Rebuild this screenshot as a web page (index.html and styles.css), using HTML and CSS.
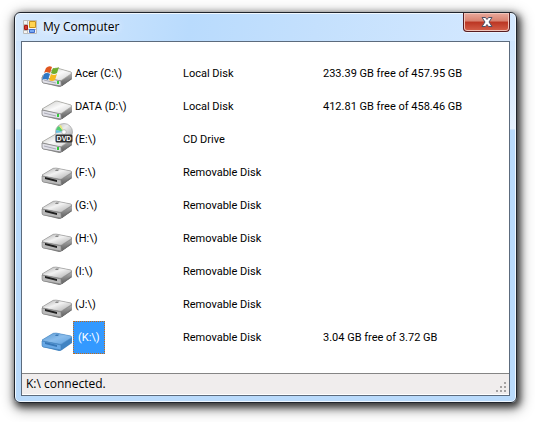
FILE: index.html
```html
<!DOCTYPE html>
<html lang="en">
<head>
<meta charset="utf-8">
<title>My Computer</title>
<link rel="stylesheet" href="styles.css">
</head>
<body>
<svg class="defs" aria-hidden="true">
  <defs>
    <linearGradient id="top" x1="0" y1="0" x2="1" y2="1">
      <stop offset="0" stop-color="#a5a5a5"/><stop offset=".45" stop-color="#f2f2f2"/><stop offset="1" stop-color="#a8a8a8"/>
    </linearGradient>
    <linearGradient id="lit" x1="0" y1="0" x2="1" y2="1">
      <stop offset="0" stop-color="#c4c4c0"/><stop offset=".5" stop-color="#fafafa"/><stop offset="1" stop-color="#cccccc"/>
    </linearGradient>
    <linearGradient id="side" x1="0" y1="0" x2="0" y2="1">
      <stop offset="0" stop-color="#b0b0b0"/><stop offset="1" stop-color="#5c5c5c"/>
    </linearGradient>
    <linearGradient id="disc" x1="0" y1="0" x2="1" y2="1">
      <stop offset="0" stop-color="#b4b8bb"/><stop offset=".4" stop-color="#ececec"/><stop offset="1" stop-color="#9a9ea1"/>
    </linearGradient>
    <linearGradient id="bluetop" x1="0" y1="0" x2="1" y2="1">
      <stop offset="0" stop-color="#5897d0"/><stop offset=".5" stop-color="#8abdec"/><stop offset="1" stop-color="#5b9fe0"/>
    </linearGradient>
    <symbol id="fixed" viewBox="0 0 32 33">
      <path d="M1 19 13 12Q14 11 16 11L30 15Q31 16 31 17V22L21 29Q20 30 18 30L2 26Q1 25 1 24Z" fill="#8a8a8a"/>
      <path d="M20 23 31 16V22L21 29Z" fill="url(#side)"/>
      <path d="M1 19 13 12Q14 11 16 11L30 15Q31 16 30 17L21 23Q20 24 18 24L2 20Z" fill="url(#lit)" stroke="#a3a39e" stroke-width=".7"/>
      <path d="M1 20 20 24V29L2 26Q1 25 1 24Z" fill="#e1e1e8" stroke="#777" stroke-width=".7"/>
      <path d="M3 23 15 26" stroke="#aaaab6"/>
      <path d="M17 24V27" stroke="#35c93b" stroke-width="2"/>
      <path d="M21 28 30 22" stroke="#707070"/>
    </symbol>
    <symbol id="removable" viewBox="0 0 32 33">
      <path d="M1 19 11 13Q12 12 15 12L30 15Q31 16 31 17V22L21 29Q20 30 18 30L2 26Q1 25 1 24Z" fill="#777"/>
      <path d="M21 23 31 17V22L21 29Z" fill="url(#side)"/>
      <path d="M1 19 11 13Q12 12 15 12L30 15Q31 16 30 17L22 22Q20 24 18 23L2 20Z" fill="url(#top)" stroke="#989898" stroke-width=".6"/>
      <path d="M1 20 20 24V29L2 26Q1 25 1 24Z" fill="#b9b9b9" stroke="#818181" stroke-width=".6"/>
      <path d="M4 21 16 24V26L4 23Z" fill="#202020"/>
      <path d="M15 13.500H18L17 15H14Z" fill="#888"/>
      <path d="M21 28 30 22" stroke="#707070"/>
    </symbol>
    <symbol id="selected" viewBox="0 0 32 33">
      <path d="M1 19 11 13Q12 12 15 12L30 15Q31 16 31 17V22L21 29Q20 30 18 30L2 26Q1 25 1 24Z" fill="#4184c3"/>
      <path d="M1 19 11 13Q12 12 15 12L30 15Q31 16 30 17L22 22Q20 24 18 23L2 20Z" fill="url(#bluetop)" stroke="#5590c8" stroke-width=".6"/>
      <path d="M1 20 20 24V29L2 26Q1 25 1 24Z" fill="#69a9e6" stroke="#427fb9" stroke-width=".6"/>
      <path d="M4 21 16 24V26L4 23Z" fill="#3878b8"/>
      <path d="M15 13.500H18L17 15H14Z" fill="#3a78b6"/>
    </symbol>
    <symbol id="flag" viewBox="0 0 32 33">
      <path d="M5 11Q8 8 11 10L9 16Q6 14 3 16Z" fill="#e0561f"/>
      <path d="M12 11Q15 12 18 10L16 16Q13 18 10 16Z" fill="#6fae2e"/>
      <path d="M3 17Q6 15 9 17L7 23Q4 21 1 23Z" fill="#2f78c6"/>
      <path d="M10 17Q13 19 16 17L14 23Q11 25 8 23Z" fill="#f5b91f"/>
    </symbol>
    <symbol id="dvd" viewBox="0 0 32 33">
      <circle cx="23" cy="9" r="8.5" fill="url(#disc)" stroke="#a3a3a3" stroke-width=".7"/>
      <path d="M23 9 15 7Q16 4 18 3Z" fill="#52ce72"/>
      <path d="M23 9 15 7 15 10Z" fill="#65bfe0"/>
      <path d="M23 9 18 3 20 2Z" fill="#e9e779"/>
      <circle cx="23" cy="9" r="2.3" fill="#fff" stroke="#aaa" stroke-width=".7"/>
      <rect x="14.5" y="11.5" width="17" height="8" rx="1.5" fill="#303030"/>
      <text x="23" y="18.3" class="dvd-text">DVD</text>
    </symbol>
  </defs>
</svg>
<main class="window">
  <header class="titlebar">
    <svg class="app-icon" viewBox="0 0 14 14" aria-hidden="true">
      <path d="M.5.5H13.5V13.5H.5Z" fill="#f4f4f4" stroke="#bbb"/>
      <path d="M0 4.5H5M4.5 0V14M4 9.5H14M0 10.5H5" stroke="#bbb"/>
      <path d="M6.500 1.500H12.500V7.500H6.500Z" fill="#ffd452" stroke="#c8921a"/>
      <path d="M1.500 5.500H4.500V9.500H1.500Z" fill="#d03c32" stroke="#a81912"/>
      <path d="M6.500 9.500H11.500V12.500H6.500Z" fill="#77a9f4" stroke="#406bc9"/>
    </svg>
    <h1 class="title">My Computer</h1>
    <button class="close" type="button" aria-label="Close">
      <svg class="close-icon" viewBox="0 0 12 10" aria-hidden="true">
        <path d="M1 .5H4.500L6 2.500 7.500.5H11L8 5 11 9.500H7.500L6 7.500 4.500 9.500H1L4 5Z" fill="#fff" stroke="#4c5066"/>
      </svg>
    </button>
  </header>
  <section class="client">
    <div class="list">
      <table class="drives">
        <colgroup><col class="col-name"><col class="col-type"><col></colgroup>
        <tbody>
          <tr><td><div class="drive"><svg class="icon"><use href="#fixed"/><use href="#flag"/></svg><span class="label">Acer (C:\)</span></div></td><td>Local Disk</td><td>233.39 GB free of 457.95 GB</td></tr>
          <tr><td><div class="drive"><svg class="icon"><use href="#fixed"/></svg><span class="label">DATA (D:\)</span></div></td><td>Local Disk</td><td>412.81 GB free of 458.46 GB</td></tr>
          <tr><td><div class="drive"><svg class="icon"><use href="#fixed"/><use href="#dvd"/></svg><span class="label">(E:\)</span></div></td><td>CD Drive</td><td></td></tr>
          <tr><td><div class="drive"><svg class="icon"><use href="#removable"/></svg><span class="label">(F:\)</span></div></td><td>Removable Disk</td><td></td></tr>
          <tr><td><div class="drive"><svg class="icon"><use href="#removable"/></svg><span class="label">(G:\)</span></div></td><td>Removable Disk</td><td></td></tr>
          <tr><td><div class="drive"><svg class="icon"><use href="#removable"/></svg><span class="label">(H:\)</span></div></td><td>Removable Disk</td><td></td></tr>
          <tr><td><div class="drive"><svg class="icon"><use href="#removable"/></svg><span class="label">(I:\)</span></div></td><td>Removable Disk</td><td></td></tr>
          <tr><td><div class="drive"><svg class="icon"><use href="#removable"/></svg><span class="label">(J:\)</span></div></td><td>Removable Disk</td><td></td></tr>
          <tr><td><div class="drive"><svg class="icon"><use href="#selected"/></svg><span class="label label-selected">(K:\)</span></div></td><td>Removable Disk</td><td>3.04 GB free of 3.72 GB</td></tr>
        </tbody>
      </table>
    </div>
    <footer class="status">
      <span>K:\ connected.</span>
      <svg class="grip" viewBox="0 0 10 10" aria-hidden="true"><path d="M8 0h2v2H8ZM4 4h2v2H4ZM8 4h2v2H8ZM0 8h2v2H0ZM4 8h2v2H4ZM8 8h2v2H8Z" fill="#a5a2a2"/></svg>
    </footer>
  </section>
</main>
</body>
</html>
```
FILE: styles.css
```css
* {
  box-sizing: border-box;
}

body {
  display: flex;
  min-height: 100vh;
  margin: 0;
  padding: 12px 18px 19px 14px;
  background: #fff;
  color: #000;
  font-family: Roboto, "Liberation Sans", Arial, sans-serif;
  font-size: 11px;
}

.defs {
  position: absolute;
  width: 0;
  height: 0;
}

.window {
  display: flex;
  flex: 1;
  flex-direction: column;
  padding: 0 6px 6px;
  border: 1px solid #20252d;
  border-radius: 6px;
  background: linear-gradient(100deg, #d6e9fd 0, #b9dbfd 35%, #c4e0fd 60%, #d5e9ff 100%) top / 100% 28px no-repeat,
    linear-gradient(#cfe5fd 28px, #e6f2ff 116px, #b9dafb 117px);
  box-shadow: inset 0 0 0 1px #f0f8ff, 2px 3px 7px 1px rgba(0, 0, 0, .7), 2px 4px 13px 3px rgba(0, 0, 0, .35);
}

.titlebar {
  display: flex;
  align-items: center;
  height: 28px;
  padding-left: 2px;
}

.app-icon {
  width: 14px;
  height: 14px;
}

.title {
  flex: 1;
  margin: 0 0 0 6px;
  font: 12px/16px "Noto Sans", "Open Sans", sans-serif;
  font-family: "Open Sans", "Noto Sans", sans-serif;
  text-shadow: 0 0 8px #fff, 0 0 8px #fff;
}

.close {
  display: flex;
  align-items: center;
  align-self: flex-start;
  justify-content: center;
  width: 47px;
  height: 19px;
  padding: 0;
  border: 1px solid #571c20;
  border-top: 0;
  border-radius: 0 0 4px 4px;
  background: linear-gradient(#e9aa9d 0, #d8816f 45%, #bb3522 50%, #d5604a 100%);
  box-shadow: inset 0 0 0 1px #f1c4ba, 0 1px 0 #e8f3ff;
}

.close-icon {
  width: 12px;
  height: 10px;
}

.client {
  display: flex;
  flex: 1;
  flex-direction: column;
  border: 1px solid #5c6b7d;
  background: #fff;
}

.list {
  flex: 1;
  padding: 15px 0 0 19px;
}

.drives {
  width: 100%;
  border-collapse: collapse;
  table-layout: fixed;
}

.col-name {
  width: 142px;
}

.col-type {
  width: 140px;
}

.drives td {
  height: 33px;
  padding: 0;
  white-space: nowrap;
}

.drive {
  display: flex;
  align-items: center;
}

.icon {
  width: 32px;
  height: 33px;
}

.label {
  padding-left: 2px;
  line-height: 33px;
}

.label-selected {
  padding: 0 5px;
  outline: 1px dotted #c66a16;
  outline-offset: -1px;
  background: #3399ff;
  color: #fff;
}

.dvd-text {
  fill: #fff;
  font: bold 7px "Liberation Sans", Arial, sans-serif;
  text-anchor: middle;
}

.status {
  display: flex;
  align-items: center;
  justify-content: space-between;
  height: 22px;
  padding: 0 3px 0 4px;
  border-top: 1px solid #858585;
  border-bottom: 1px solid #fff;
  background: #f0eded;
  font: 12px/16px "Open Sans", "Noto Sans", sans-serif;
}

.grip {
  align-self: flex-end;
  width: 10px;
  height: 10px;
  margin-bottom: 2px;
}
```
